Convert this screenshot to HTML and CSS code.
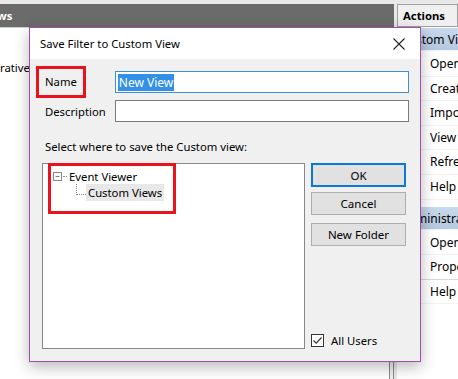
FILE: index.html
```html
<!DOCTYPE html>
<html lang="en">
<head>
    <meta charset="UTF-8">
    <title>Event Viewer - Save Filter to Custom View</title>
    <link rel="stylesheet" href="styles.css">
</head>
<body>
    <div class="app">
        <div class="top-strip"></div>
        <div class="main">
            <div class="left-pane">
                <div class="pane-head">ws</div>
                <div class="pane-body">
                    <div class="pane-row">rative</div>
                </div>
                <div class="scroll-edge"></div>
            </div>
            <div class="actions">
                <div class="actions-head">Actions</div>
                <ul class="action-list">
                    <li class="group">Custom Views</li>
                    <li>Open Saved Log...</li>
                    <li>Create Custom View...</li>
                    <li>Import Custom View...</li>
                    <li>View</li>
                    <li>Refresh</li>
                    <li>Help</li>
                    <li class="group">Administrative Events</li>
                    <li>Open</li>
                    <li class="sep">Properties</li>
                    <li>Help</li>
                </ul>
            </div>
        </div>
    </div>

    <div class="dialog">
        <div class="dialog-title">
            <span>Save Filter to Custom View</span>
            <svg class="close" width="12" height="12" viewBox="0 0 12 12">
                <path d="M0.5 0.5 L11.5 11.5 M11.5 0.5 L0.5 11.5" stroke="#222" stroke-width="1.1" fill="none"/>
            </svg>
        </div>
        <div class="dialog-body">
            <div class="field">
                <span class="label marked">Name</span>
                <div class="input focused"><span class="selected">New View</span></div>
            </div>
            <div class="field">
                <span class="label">Description</span>
                <div class="input"></div>
            </div>
            <p class="hint">Select where to save the Custom view:</p>
            <div class="lower">
                <div class="tree">
                    <div class="tree-node">
                        <span class="toggle">&minus;</span><span class="dots-h"></span><span>Event Viewer</span>
                    </div>
                    <div class="tree-child">
                        <span class="dots-l"></span><span class="picked">Custom Views</span>
                    </div>
                    <div class="mark-box"></div>
                </div>
                <div class="buttons">
                    <button class="btn default">OK</button>
                    <button class="btn">Cancel</button>
                    <button class="btn spaced">New Folder</button>
                    <label class="check">
                        <svg width="13" height="13" viewBox="0 0 13 13">
                            <rect x="0.5" y="0.5" width="12" height="12" fill="#fff" stroke="#333"/>
                            <path d="M2.5 6.5 L5.2 9.2 L10.5 3.5" stroke="#333" stroke-width="1.2" fill="none"/>
                        </svg>
                        All Users
                    </label>
                </div>
            </div>
        </div>
    </div>
</body>
</html>
```

FILE: styles.css
```css
body {
    margin: 0;
    font-family: "Noto Sans", "Open Sans", sans-serif;
    font-size: 11.3px;
    color: #000;
    background: #fff;
    width: 458px;
    height: 379px;
    overflow: hidden;
    position: relative;
}

.app {
    display: flex;
    flex-direction: column;
    height: 379px;
}

.top-strip {
    height: 4px;
    background: #e8e8e8;
}

.main {
    flex: 1;
    display: flex;
    background: #e8e8e8;
}

.left-pane {
    width: 394px;
    display: flex;
    flex-direction: column;
    background: #fff;
    position: relative;
}

.pane-head {
    height: 23px;
    line-height: 23px;
    background: #6b6b6b;
    color: #fff;
    font-weight: bold;
    border-bottom: 1px solid #d0d0d0;
    text-indent: -3px;
}

.pane-body {
    flex: 1;
    padding-top: 32px;
}

.pane-row {
    line-height: 16px;
}

.scroll-edge {
    position: absolute;
    right: 0;
    bottom: 0;
    width: 3px;
    height: 30px;
    border-left: 1px solid #8a8a8a;
    border-right: 1px solid #8a8a8a;
    background: #f0f0f0;
}

.actions {
    margin-left: 3px;
    flex: 1;
    display: flex;
    flex-direction: column;
    background: #fff;
    overflow: hidden;
}

.actions-head {
    height: 21px;
    line-height: 21px;
    background: #f0f0f0;
    border: 1px solid #a0a0a0;
    font-weight: bold;
    padding-left: 5px;
    white-space: nowrap;
}

.action-list {
    list-style: none;
    margin: 0;
    padding: 0;
    white-space: nowrap;
}

.action-list li {
    height: 24.6px;
    line-height: 24px;
    padding-left: 33px;
    border-bottom: 1px solid #f3f3f3;
    box-sizing: border-box;
    font-size: 12px;
}

.action-list li.group {
    height: 23px;
    line-height: 23px;
    padding-left: 4px;
    background: linear-gradient(#c9d9ec, #b4c8e0);
    margin-top: 1px;
}

.action-list li.group + li {
    margin-top: 1px;
}

.action-list li.sep {
    border-bottom-color: #d8d8d8;
}

.action-list li:nth-child(8) {
    margin-top: 7px;
}

/* dialog sits over the console */
.dialog {
    position: absolute;
    left: 29px;
    top: 27px;
    width: 390px;
    height: 333px;
    border: 1px solid #a14ea6;
    background: #f0f0f0;
    box-shadow: 0 5px 14px rgba(0, 0, 0, 0.28);
    display: flex;
    flex-direction: column;
}

.dialog-title {
    height: 31px;
    background: #fff;
    display: flex;
    align-items: center;
    justify-content: space-between;
    padding: 0 15px 0 10px;
}

.close {
    margin-top: 1px;
}

.dialog-body {
    flex: 1;
    display: flex;
    flex-direction: column;
    padding: 7px 11px 12px 6px;
}

.field {
    display: flex;
    align-items: center;
}

.field + .field {
    margin-top: 2px;
}

.label {
    width: 70px;
    padding-left: 9px;
}

.label.marked {
    width: 38px;
    height: 26px;
    line-height: 26px;
    padding-left: 6px;
    border: 3px solid #e8131d;
    margin-right: 29px;
}

.input {
    width: 292px;
    height: 20px;
    border: 1px solid #7a7a7a;
    background: #fff;
    display: flex;
    align-items: center;
    padding-left: 2px;
    font-size: 12px;
}

.input.focused {
    border-color: #3f8fc8;
}

.selected {
    background: #3390e8;
    color: #fff;
    line-height: 17px;
    padding: 0 1px;
}

.hint {
    margin: 17px 0 0 9px;
    line-height: 16px;
}

.lower {
    flex: 1;
    display: flex;
    margin-top: 8px;
    padding-left: 6px;
}

.tree {
    width: 261px;
    border: 1px solid #828790;
    background: #fff;
    position: relative;
    padding-top: 4px;
}

.tree-node {
    display: flex;
    align-items: center;
    height: 17px;
    padding-left: 10px;
}

.toggle {
    width: 7px;
    height: 7px;
    border: 1px solid #888;
    font-size: 8px;
    line-height: 6px;
    text-align: center;
    color: #333;
    overflow: hidden;
}

.dots-h {
    width: 4px;
    border-top: 1px dotted #888;
    margin: 0 2px 0 1px;
}

.tree-child {
    display: flex;
    align-items: flex-start;
    padding-left: 33px;
    margin-top: -1px;
}

.dots-l {
    width: 9px;
    height: 10px;
    border-left: 1px dotted #888;
    border-bottom: 1px dotted #888;
}

.picked {
    background: #e8e8e8;
    padding: 0 2px;
    line-height: 17px;
}

.mark-box {
    position: absolute;
    left: 5px;
    top: -1px;
    width: 122px;
    height: 45px;
    border: 3px solid #e8131d;
}

.buttons {
    margin-left: 6px;
    width: 95px;
    display: flex;
    flex-direction: column;
}

.btn {
    font-family: inherit;
    font-size: 11.5px;
    height: 23px;
    margin: 0 0 5px;
    padding: 0;
    background: #e1e1e1;
    border: 1px solid #adadad;
    color: #000;
}

.btn.default {
    border: 2px solid #0a78d4;
    height: 24px;
}

.btn.spaced {
    margin-top: 3px;
}

.check {
    margin-top: auto;
    display: flex;
    align-items: center;
    gap: 7px;
    padding-bottom: 1px;
}
```
